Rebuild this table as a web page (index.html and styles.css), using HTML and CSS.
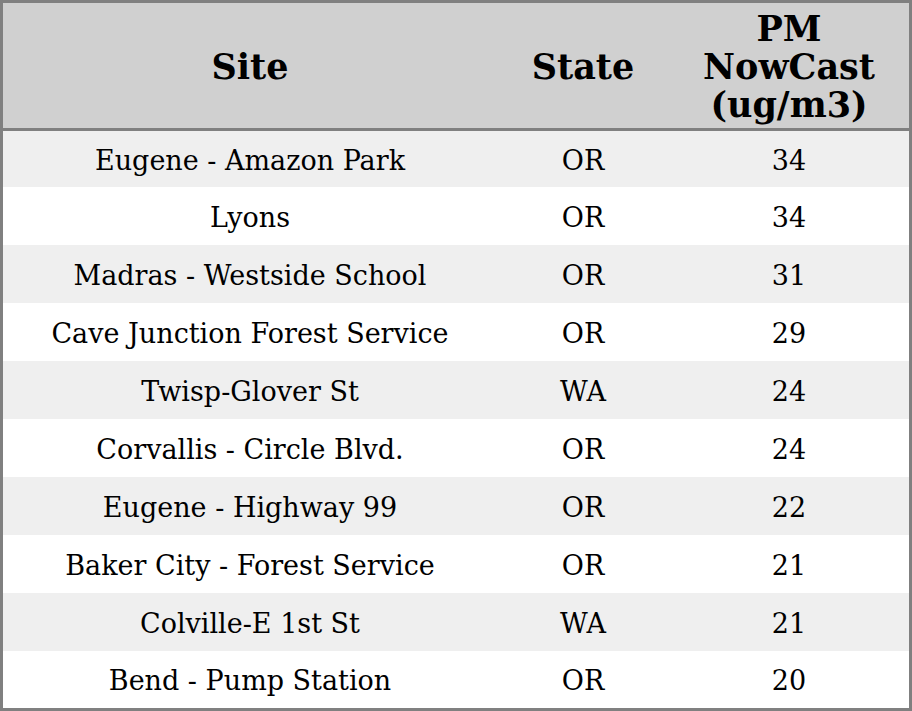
FILE: index.html
```html
<!DOCTYPE html>
<html>
<head>
<meta charset="utf-8">
<link rel="stylesheet" href="styles.css">
</head>
<body>
<table class="data">
  <colgroup>
    <col class="c-site">
    <col class="c-state">
    <col class="c-pm">
  </colgroup>
  <thead>
    <tr class="head">
      <th>Site</th>
      <th>State</th>
      <th>PM NowCast (ug/m3)</th>
    </tr>
  </thead>
  <tbody>
    <tr class="odd first"><td>Eugene - Amazon Park</td><td>OR</td><td>34</td></tr>
    <tr class="even"><td>Lyons</td><td>OR</td><td>34</td></tr>
    <tr class="odd"><td>Madras - Westside School</td><td>OR</td><td>31</td></tr>
    <tr class="even"><td>Cave Junction Forest Service</td><td>OR</td><td>29</td></tr>
    <tr class="odd"><td>Twisp-Glover St</td><td>WA</td><td>24</td></tr>
    <tr class="even"><td>Corvallis - Circle Blvd.</td><td>OR</td><td>24</td></tr>
    <tr class="odd"><td>Eugene - Highway 99</td><td>OR</td><td>22</td></tr>
    <tr class="even"><td>Baker City - Forest Service</td><td>OR</td><td>21</td></tr>
    <tr class="odd"><td>Colville-E 1st St</td><td>WA</td><td>21</td></tr>
    <tr class="even last"><td>Bend - Pump Station</td><td>OR</td><td>20</td></tr>
  </tbody>
</table>
</body>
</html>
```
FILE: styles.css
```css
html, body {
  margin: 0;
  padding: 0;
  background: #ffffff;
}
.data {
  width: 912px;
  border-collapse: separate;
  border-spacing: 0;
  table-layout: fixed;
  border: 3px solid #808080;
  font-family: "DejaVu Serif", serif;
  color: #000;
  box-sizing: border-box;
}
.c-site { width: 494px; }
.c-state { width: 172px; }
.c-pm { width: 240px; }
.head th {
  background: #d0d0d0;
  font-size: 35px;
  line-height: 38px;
  font-weight: bold;
  height: 128px;
  padding: 2px 10px 0;
  text-align: center;
  vertical-align: middle;
  border-bottom: 3px solid #808080;
  box-sizing: border-box;
}
.data td {
  font-size: 27px;
  text-align: center;
  vertical-align: middle;
  height: 58px;
  padding: 2px 0 0;
  box-sizing: border-box;
}
.first td { height: 56px; }
.last td { height: 57px; }
.odd td { background: #efefef; }
.even td { background: #ffffff; }
```
